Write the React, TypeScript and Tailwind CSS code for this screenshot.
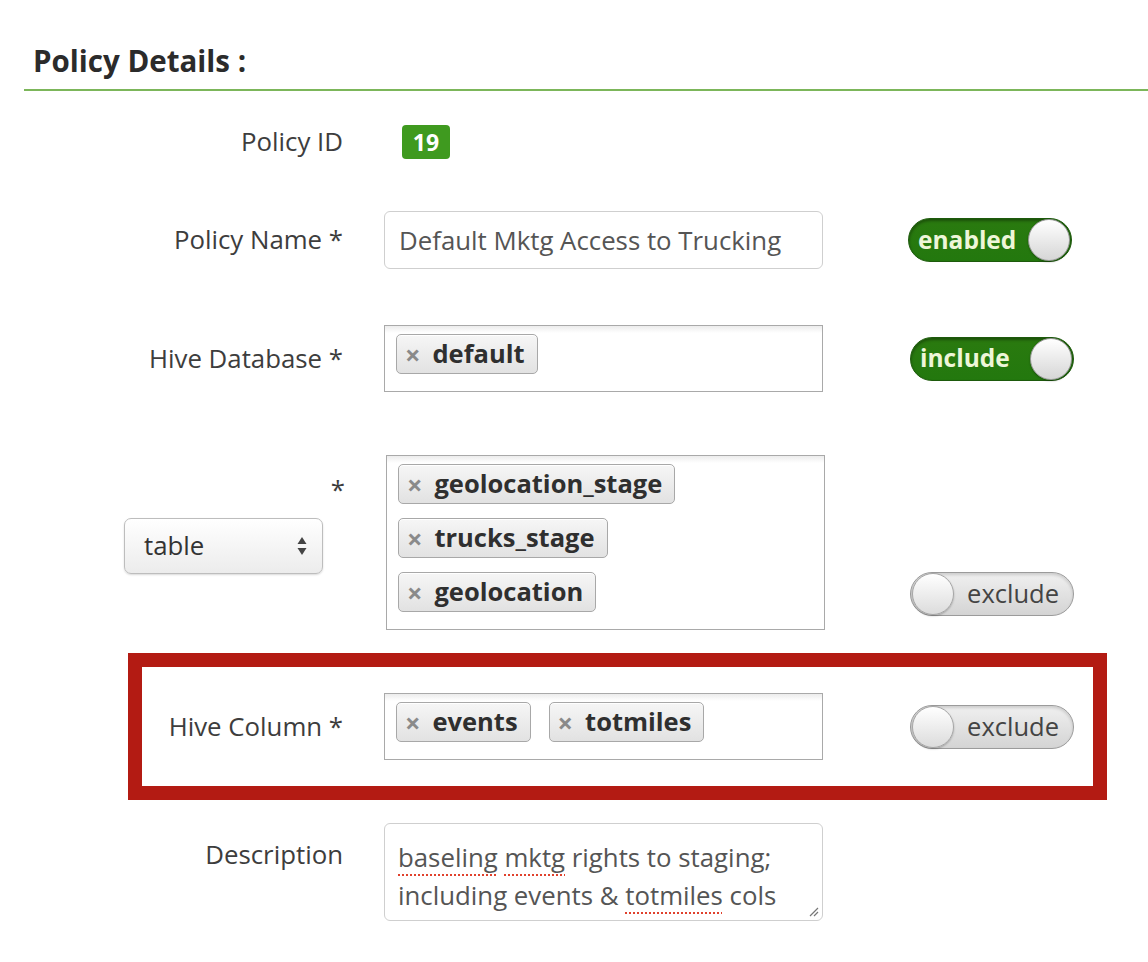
import React from 'react';

const font = { fontFamily: '"Open Sans", "Liberation Sans", sans-serif' };

function Tag({ label }: { label: string }) {
  return (
    <span className="inline-flex h-[40px] items-center rounded-[5px] border border-[#a8a8a8] bg-gradient-to-b from-[#f6f6f6] to-[#e2e2e2] pl-[8px] pr-[12px] shadow-[0_1px_0_#fff_inset]">
      <span className="mr-[12px] text-[27px] font-bold leading-none text-[#8a8a8a]">×</span>
      <span className="text-[25.5px] font-bold leading-none text-[#2f2f2f]">{label}</span>
    </span>
  );
}

function OnToggle({ label }: { label: string }) {
  return (
    <div className="flex h-[44px] w-[164px] items-center justify-between rounded-full border border-[#1d5a0c] bg-gradient-to-b from-[#2a7a0f] to-[#23780e] pl-[9px] pr-[1px] shadow-[0_2px_3px_rgba(0,0,0,0.35)_inset]">
      <span className="text-[24.5px] font-bold leading-none text-[#eef6d8]">{label}</span>
      <span className="h-[42px] w-[42px] rounded-full border border-[#9a9a9a] bg-gradient-to-b from-[#ffffff] to-[#d6d6d6] shadow-[0_1px_2px_rgba(0,0,0,0.3)]" />
    </div>
  );
}

function OffToggle({ label }: { label: string }) {
  return (
    <div className="flex h-[44px] w-[164px] items-center justify-between rounded-full border border-[#9b9b9b] bg-gradient-to-b from-[#f0f0f0] to-[#d4d4d4] pl-[1px] pr-[14px] shadow-[0_2px_3px_rgba(0,0,0,0.15)_inset]">
      <span className="h-[42px] w-[42px] rounded-full border border-[#a6a6a6] bg-gradient-to-b from-[#ffffff] to-[#dcdcdc] shadow-[0_1px_2px_rgba(0,0,0,0.25)]" />
      <span className="text-[25.5px] leading-none text-[#444]">{label}</span>
    </div>
  );
}

function TagBox({ children, className }: { children: React.ReactNode; className: string }) {
  return (
    <div
      className={`border-[1.5px] border-[#a9a9a9] bg-gradient-to-b from-[#ececec] via-white to-white bg-[length:100%_14px] bg-no-repeat pl-[11px] pt-[8px] ${className}`}
    >
      {children}
    </div>
  );
}

const Label = ({ text, w = 'w-[343px]' }: { text: string; w?: string }) => (
  <div className={`${w} shrink-0 text-right text-[25.8px] leading-none text-[#3d3d3d]`}>{text}</div>
);

const spell = 'underline decoration-[#e0412d] decoration-dotted decoration-2 underline-offset-[7px]';

export default function App() {
  return (
    <div className="h-[962px] w-[1148px] overflow-hidden bg-white" style={font}>
      {/* Header */}
      <div className="pl-[33px] pt-[41px] text-[29.5px] font-bold leading-[40px] text-[#2b2b2b]">
        Policy Details :
      </div>
      <div className="ml-[24px] mt-[8px] h-[2px] bg-[#7cb65a]" />

      {/* Policy ID */}
      <div className="mt-[31px] flex h-[40px] items-center">
        <Label text="Policy ID" />
        <div className="ml-[59px] flex h-[34px] w-[48px] items-center justify-center rounded-[4px] bg-[#3f9a1f] text-[23px] font-bold leading-none text-white">
          19
        </div>
      </div>

      {/* Policy Name */}
      <div className="mt-[49px] flex h-[58px] items-center">
        <Label text="Policy Name *" />
        <div className="ml-[41px] flex h-[58px] w-[439px] items-center rounded-[6px] border-[1.5px] border-[#cfcfcf] px-[14px] text-[25.8px] text-[#555]">
          Default Mktg Access to Trucking
        </div>
        <div className="ml-[85px]">
          <OnToggle label="enabled" />
        </div>
      </div>

      {/* Hive Database */}
      <div className="mt-[56px] flex h-[67px] items-center">
        <Label text="Hive Database *" />
        <TagBox className="ml-[41px] h-[67px] w-[439px]">
          <Tag label="default" />
        </TagBox>
        <div className="ml-[87px]">
          <OnToggle label="include" />
        </div>
      </div>

      {/* Table */}
      <div className="mt-[63px] flex h-[175px]">
        <div className="flex w-[345px] shrink-0 flex-col">
          <div className="mt-[22px] self-end text-[25.8px] leading-none text-[#3d3d3d]">*</div>
          <div className="ml-[124px] mt-[15px] flex h-[56px] w-[199px] items-center justify-between rounded-[7px] border-[1.5px] border-[#bdbdbd] bg-gradient-to-b from-white to-[#ececec] pl-[19px] pr-[15px] shadow-[0_1px_2px_rgba(0,0,0,0.15)]">
            <span className="text-[25.8px] leading-none text-[#333]">table</span>
            <svg width="10" height="22" viewBox="0 0 10 22">
              <path d="M5 2 L9.5 9 L0.5 9 Z" fill="#444" />
              <path d="M5 20 L9.5 13 L0.5 13 Z" fill="#444" />
            </svg>
          </div>
        </div>
        <TagBox className="ml-[41px] flex h-[175px] w-[439px] flex-col items-start gap-[14px]">
          <Tag label="geolocation_stage" />
          <Tag label="trucks_stage" />
          <Tag label="geolocation" />
        </TagBox>
        <div className="ml-[85px] mt-[117px]">
          <OffToggle label="exclude" />
        </div>
      </div>

      {/* Hive Column (highlighted) */}
      <div className="ml-[128px] mt-[23px] h-[147px] w-[979px] border-[14px] border-[#b31b13]">
        <div className="mt-[26px] flex h-[67px] items-center">
          <Label text="Hive Column *" w="w-[201px]" />
          <TagBox className="ml-[41px] flex h-[67px] w-[439px] gap-[18px]">
            <Tag label="events" />
            <Tag label="totmiles" />
          </TagBox>
          <div className="ml-[87px]">
            <OffToggle label="exclude" />
          </div>
        </div>
      </div>

      {/* Description */}
      <div className="mt-[23px] flex h-[98px]">
        <div className="w-[343px] shrink-0 pt-[19px] text-right text-[25.8px] leading-none text-[#3d3d3d]">
          Description
        </div>
        <div className="relative ml-[41px] h-[98px] w-[439px] rounded-[6px] border-[1.5px] border-[#cfcfcf] px-[13px] pt-[14px] text-[25.8px] leading-[38px] text-[#555]">
          <div>
            <span className={spell}>baseling</span> <span className={spell}>mktg</span> rights to staging;
          </div>
          <div>
            including events &amp; <span className={spell}>totmiles</span> cols
          </div>
          <svg className="absolute bottom-[3px] right-[3px]" width="12" height="12" viewBox="0 0 12 12">
            <path d="M11 3 L3 11 M11 7 L7 11" stroke="#777" strokeWidth="1.2" />
          </svg>
        </div>
      </div>
    </div>
  );
}
